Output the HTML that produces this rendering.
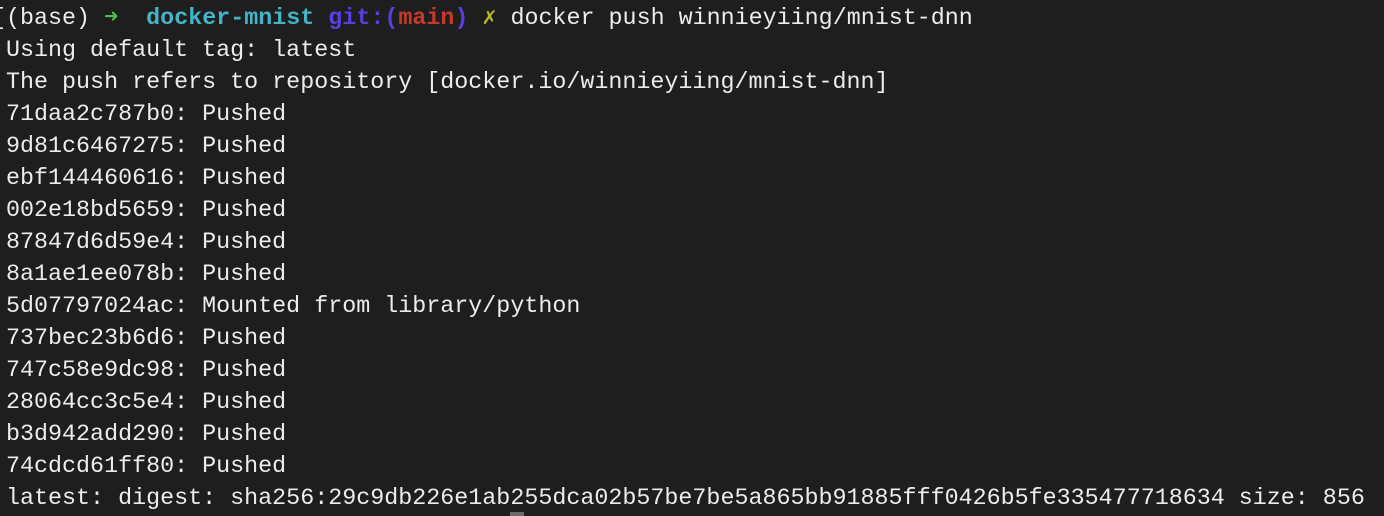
<!DOCTYPE html>
<html><head><style>
html,body{margin:0;padding:0;background:#1e1e1e;width:1384px;height:516px;overflow:hidden}
pre{margin:0;position:absolute;left:-8px;top:3px;font-family:"Liberation Mono","DejaVu Sans Mono",monospace;font-size:23.35px;line-height:32px;color:#ececec}
.g{color:#4cc14a;font-weight:bold}.c{color:#45b4c6;font-weight:bold}.b{color:#5b3ee2;font-weight:bold}.r{color:#c5392a;font-weight:bold}.y{color:#b8b82c;font-weight:bold}
.cur{position:absolute;left:510px;top:512px;width:14px;height:4px;background:#6a6a6a}
</style></head><body>
<pre>[(base) <span class="g">➜</span>  <span class="c">docker-mnist</span> <span class="b">git:(</span><span class="r">main</span><span class="b">)</span> <span class="y">✗</span> docker push winnieyiing/mnist-dnn
 Using default tag: latest
 The push refers to repository [docker.io/winnieyiing/mnist-dnn]
 71daa2c787b0: Pushed
 9d81c6467275: Pushed
 ebf144460616: Pushed
 002e18bd5659: Pushed
 87847d6d59e4: Pushed
 8a1ae1ee078b: Pushed
 5d07797024ac: Mounted from library/python
 737bec23b6d6: Pushed
 747c58e9dc98: Pushed
 28064cc3c5e4: Pushed
 b3d942add290: Pushed
 74cdcd61ff80: Pushed
 latest: digest: sha256:29c9db226e1ab255dca02b57be7be5a865bb91885fff0426b5fe335477718634 size: 856</pre>
<div class="cur"></div>
</body></html>
